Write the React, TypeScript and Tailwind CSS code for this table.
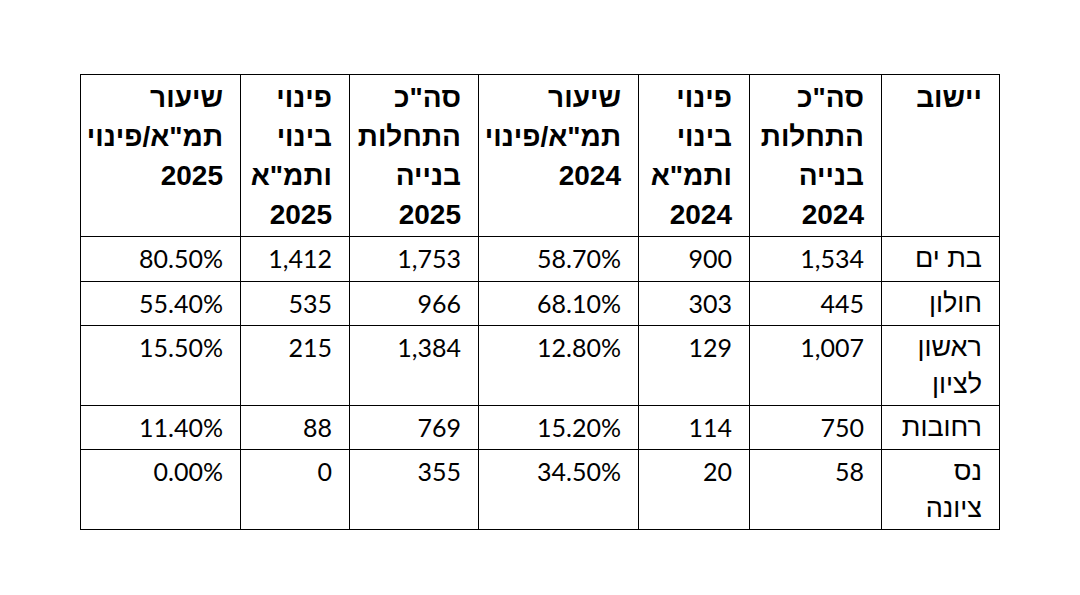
import React from "react";

const headers: string[][] = [
  ["יישוב"],
  ["סה\"כ", "התחלות", "בנייה", "2024"],
  ["פינוי", "בינוי", "ותמ\"א", "2024"],
  ["שיעור", "תמ\"א/פינוי", "2024"],
  ["סה\"כ", "התחלות", "בנייה", "2025"],
  ["פינוי", "בינוי", "ותמ\"א", "2025"],
  ["שיעור", "תמ\"א/פינוי", "2025"],
];

const rows: { name: string[]; vals: string[]; h: string }[] = [
  { name: ["בת ים"], vals: ["1,534", "900", "58.70%", "1,753", "1,412", "80.50%"], h: "h-[45px]" },
  { name: ["חולון"], vals: ["445", "303", "68.10%", "966", "535", "55.40%"], h: "h-[44px]" },
  { name: ["ראשון", "לציון"], vals: ["1,007", "129", "12.80%", "1,384", "215", "15.50%"], h: "h-[80px]" },
  { name: ["רחובות"], vals: ["750", "114", "15.20%", "769", "88", "11.40%"], h: "h-[44px]" },
  { name: ["נס", "ציונה"], vals: ["58", "20", "34.50%", "355", "0", "0.00%"], h: "h-[80px]" },
];

const widths = ["w-[118px]", "w-[132px]", "w-[111px]", "w-[160px]", "w-[129px]", "w-[109px]", "w-[160px]"];

export default function App() {
  return (
    <div className="w-[1080px] h-[595px] bg-white pt-[74px] pl-[80px]">
      <table
        dir="rtl"
        className="table-fixed border-collapse w-[920px] text-black"
      >
        <colgroup>
          {widths.map((w, i) => (
            <col key={i} className={w} />
          ))}
        </colgroup>
        <thead>
          <tr className="h-[162px]">
            {headers.map((lines, i) => (
              <th
                key={i}
                className="border border-black align-top text-right pr-[17px] pl-[4px] pt-[3px] font-bold text-[28px] leading-[39px] font-['Liberation_Sans',Arial,sans-serif]"
              >
                {lines.map((l, j) => (
                  <div key={j} className="whitespace-nowrap">
                    {l}
                  </div>
                ))}
              </th>
            ))}
          </tr>
        </thead>
        <tbody>
          {rows.map((r, i) => (
            <tr key={i} className={r.h}>
              <td className="border border-black align-top text-right pr-[17px] pl-[4px] pt-[3px] text-[27px] leading-[37px] font-['Liberation_Sans',Arial,sans-serif]">
                {r.name.map((l, j) => (
                  <div key={j} className="whitespace-nowrap">
                    {l}
                  </div>
                ))}
              </td>
              {r.vals.map((v, j) => (
                <td
                  key={j}
                  className="border border-black align-top text-right pr-[17px] pl-[4px] pt-[3px] text-[25px] leading-[37px] font-['Lato','Open_Sans',sans-serif]"
                >
                  <span dir="ltr">{v}</span>
                </td>
              ))}
            </tr>
          ))}
        </tbody>
      </table>
    </div>
  );
}
